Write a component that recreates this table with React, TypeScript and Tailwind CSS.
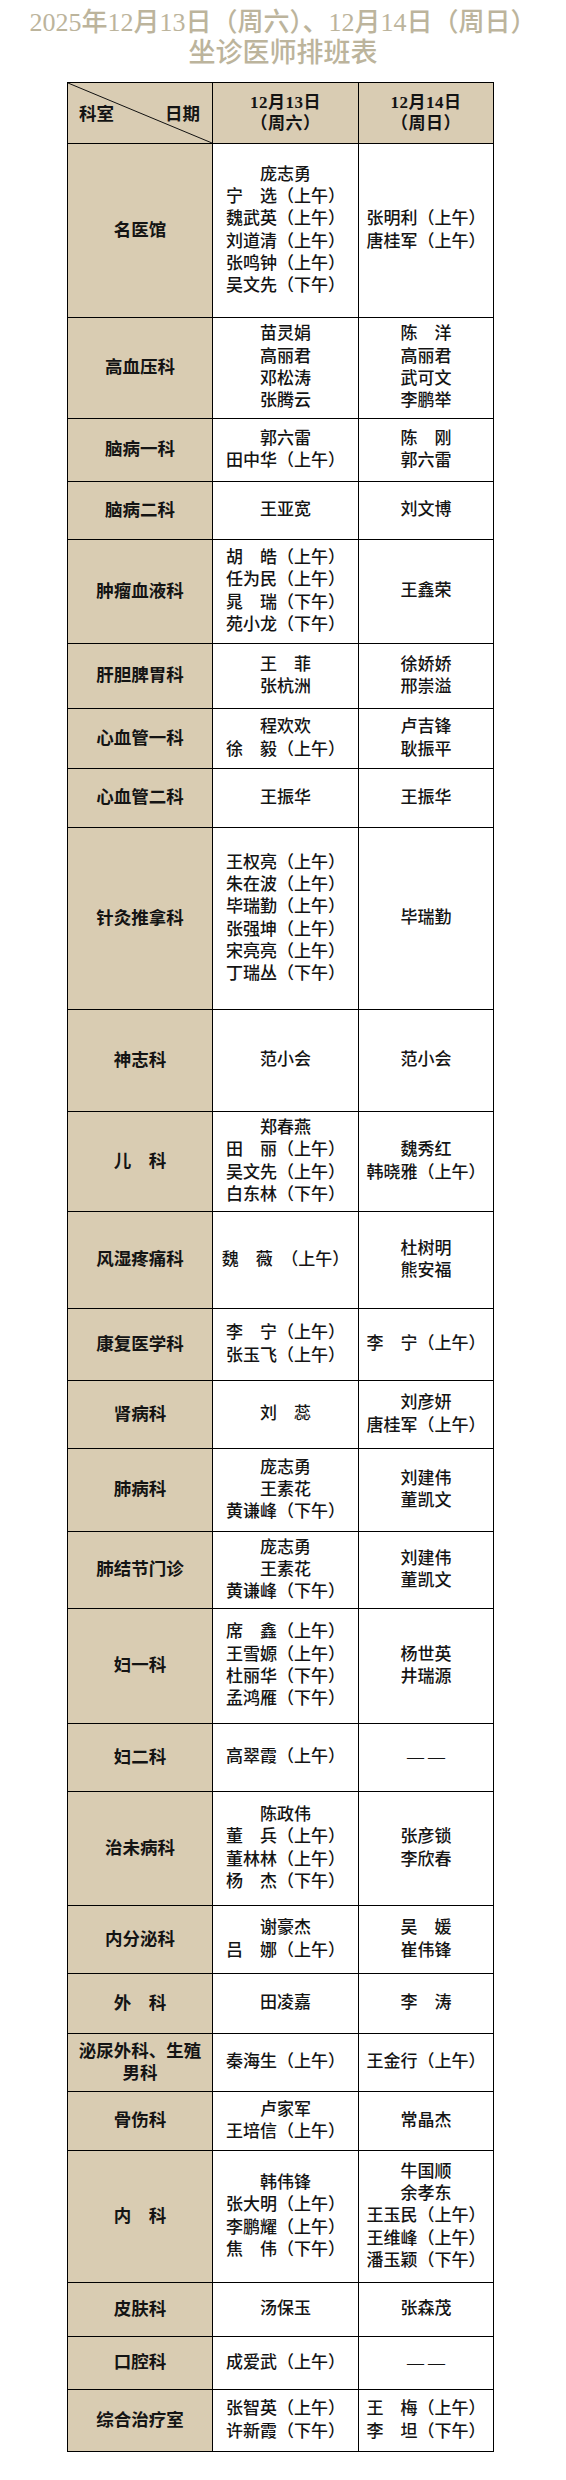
import React from "react";

type Row = { dept: string; h: number; a: string[]; b: string[] };

const rows: Row[] = [
  { dept: "名医馆", h: 174, a: ["庞志勇", "宁　选（上午）", "魏武英（上午）", "刘道清（上午）", "张鸣钟（上午）", "吴文先（下午）"], b: ["张明利（上午）", "唐桂军（上午）"] },
  { dept: "高血压科", h: 101, a: ["苗灵娟", "高丽君", "邓松涛", "张腾云"], b: ["陈　洋", "高丽君", "武可文", "李鹏举"] },
  { dept: "脑病一科", h: 63, a: ["郭六雷", "田中华（上午）"], b: ["陈　刚", "郭六雷"] },
  { dept: "脑病二科", h: 58, a: ["王亚宽"], b: ["刘文博"] },
  { dept: "肿瘤血液科", h: 104, a: ["胡　皓（上午）", "任为民（上午）", "晁　瑞（下午）", "苑小龙（下午）"], b: ["王鑫荣"] },
  { dept: "肝胆脾胃科", h: 65, a: ["王　菲", "张杭洲"], b: ["徐娇娇", "邢崇溢"] },
  { dept: "心血管一科", h: 60, a: ["程欢欢", "徐　毅（上午）"], b: ["卢吉锋", "耿振平"] },
  { dept: "心血管二科", h: 59, a: ["王振华"], b: ["王振华"] },
  { dept: "针灸推拿科", h: 182, a: ["王权亮（上午）", "朱在波（上午）", "毕瑞勤（上午）", "张强坤（上午）", "宋亮亮（上午）", "丁瑞丛（下午）"], b: ["毕瑞勤"] },
  { dept: "神志科", h: 102, a: ["范小会"], b: ["范小会"] },
  { dept: "儿　科", h: 100, a: ["郑春燕", "田　丽（上午）", "吴文先（上午）", "白东林（下午）"], b: ["魏秀红", "韩晓雅（上午）"] },
  { dept: "风湿疼痛科", h: 97, a: ["魏　薇　（上午）"], b: ["杜树明", "熊安福"] },
  { dept: "康复医学科", h: 72, a: ["李　宁（上午）", "张玉飞（上午）"], b: ["李　宁（上午）"] },
  { dept: "肾病科", h: 68, a: ["刘　蕊"], b: ["刘彦妍", "唐桂军（上午）"] },
  { dept: "肺病科", h: 83, a: ["庞志勇", "王素花", "黄谦峰（下午）"], b: ["刘建伟", "董凯文"] },
  { dept: "肺结节门诊", h: 77, a: ["庞志勇", "王素花", "黄谦峰（下午）"], b: ["刘建伟", "董凯文"] },
  { dept: "妇一科", h: 115, a: ["席　鑫（上午）", "王雪嫄（上午）", "杜丽华（下午）", "孟鸿雁（下午）"], b: ["杨世英", "井瑞源"] },
  { dept: "妇二科", h: 68, a: ["高翠霞（上午）"], b: ["——"] },
  { dept: "治未病科", h: 114, a: ["陈政伟", "董　兵（上午）", "董林林（上午）", "杨　杰（下午）"], b: ["张彦锁", "李欣春"] },
  { dept: "内分泌科", h: 68, a: ["谢豪杰", "吕　娜（上午）"], b: ["吴　媛", "崔伟锋"] },
  { dept: "外　科", h: 60, a: ["田凌嘉"], b: ["李　涛"] },
  { dept: "泌尿外科、生殖男科", h: 58, a: ["秦海生（上午）"], b: ["王金行（上午）"] },
  { dept: "骨伤科", h: 59, a: ["卢家军", "王培信（上午）"], b: ["常晶杰"] },
  { dept: "内　科", h: 132, a: ["韩伟锋", "张大明（上午）", "李鹏耀（上午）", "焦　伟（下午）"], b: ["牛国顺", "余孝东", "王玉民（上午）", "王维峰（上午）", "潘玉颖（下午）"] },
  { dept: "皮肤科", h: 54, a: ["汤保玉"], b: ["张森茂"] },
  { dept: "口腔科", h: 53, a: ["成爱武（上午）"], b: ["——"] },
  { dept: "综合治疗室", h: 61, a: ["张智英（上午）", "许新霞（下午）"], b: ["王　梅（上午）", "李　坦（下午）"] },
];

const FONT = "font-['Liberation_Serif','Noto_Sans_CJK_SC',serif]";

function Names({ list }: { list: string[] }) {
  return (
    <div className="flex flex-col items-center text-[17px] leading-[22.3px] font-medium text-[#141414]">
      {list.map((n, i) =>
        n === "——" ? (
          <div key={i} className="tracking-[4px] font-normal pl-[4px]">——</div>
        ) : (
          <div key={i} className="whitespace-nowrap">{n}</div>
        )
      )}
    </div>
  );
}

export default function App() {
  return (
    <div className={`w-[566px] h-[2480px] bg-white ${FONT}`}>
      <div className="pt-[8px] text-center text-[#bcb49c] font-medium">
        <div className="text-[26px] leading-[30px] whitespace-nowrap">2025年12月13日（周六）、12月14日（周日）</div>
        <div className="text-[27px] leading-[30px]">坐诊医师排班表</div>
      </div>
      <div className="ml-[67px] mt-[14px] w-[427px] border border-black">
        <div className="flex h-[61px] border-b border-black bg-[#d9ccb3]">
          <div className="relative w-[145px] border-r border-black flex items-center justify-between pl-[11px] pr-[12px] pt-[2px] text-[17.5px] font-bold text-[#141414]">
            <svg className="absolute inset-0 w-full h-full" viewBox="0 0 100 100" preserveAspectRatio="none">
              <line x1="0" y1="0" x2="100" y2="100" stroke="#111" strokeWidth="1" vectorEffect="non-scaling-stroke" />
            </svg>
            <span className="relative">科室</span>
            <span className="relative">日期</span>
          </div>
          <div className="w-[146px] border-r border-black flex flex-col items-center justify-center text-[17px] leading-[21px] font-bold text-[#141414] tracking-[0.5px]">
            <div>12月13日</div>
            <div>（周六）</div>
          </div>
          <div className="flex-1 flex flex-col items-center justify-center text-[17px] leading-[21px] font-bold text-[#141414] tracking-[0.5px]">
            <div>12月14日</div>
            <div>（周日）</div>
          </div>
        </div>
        {rows.map((r, i) => (
          <div
            key={i}
            className={`flex ${i < rows.length - 1 ? "border-b border-black" : ""}`}
            style={{ height: r.h }}
          >
            <div className="w-[145px] border-r border-black bg-[#d9ccb2] flex items-center justify-center text-center px-[8px] text-[17.5px] leading-[21.5px] font-bold text-[#141414]">
              {r.dept}
            </div>
            <div className="w-[146px] border-r border-black flex items-center justify-center">
              <Names list={r.a} />
            </div>
            <div className="flex-1 flex items-center justify-center">
              <Names list={r.b} />
            </div>
          </div>
        ))}
      </div>
    </div>
  );
}
